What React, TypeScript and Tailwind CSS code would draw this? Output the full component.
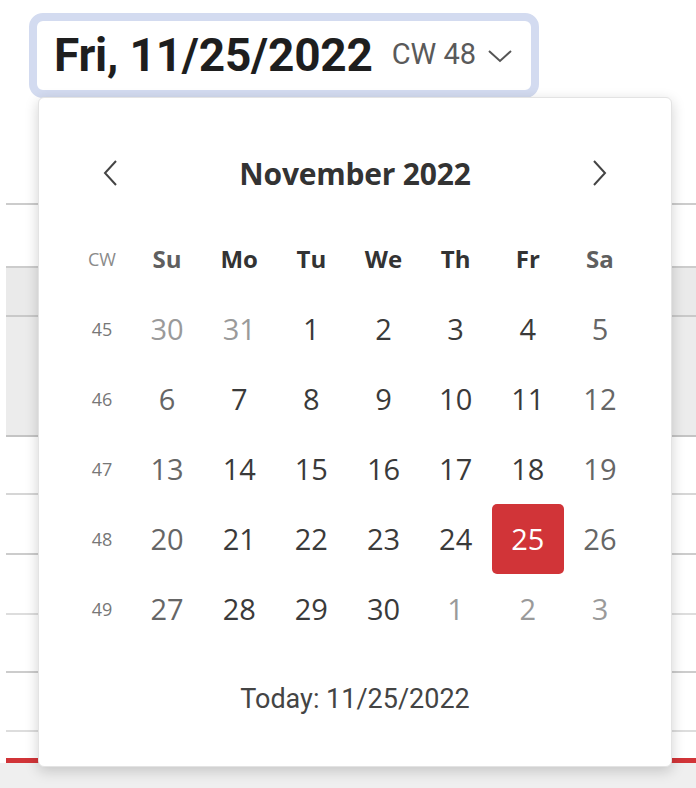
import React from 'react';

const weekdays = ['Su', 'Mo', 'Tu', 'We', 'Th', 'Fr', 'Sa'];

// each week: calendar week number + 7 days, `out` marks days from other months
const weeks = [
  { cw: 45, days: [{ d: 30, out: true }, { d: 31, out: true }, { d: 1 }, { d: 2 }, { d: 3 }, { d: 4 }, { d: 5 }] },
  { cw: 46, days: [{ d: 6 }, { d: 7 }, { d: 8 }, { d: 9 }, { d: 10 }, { d: 11 }, { d: 12 }] },
  { cw: 47, days: [{ d: 13 }, { d: 14 }, { d: 15 }, { d: 16 }, { d: 17 }, { d: 18 }, { d: 19 }] },
  { cw: 48, days: [{ d: 20 }, { d: 21 }, { d: 22 }, { d: 23 }, { d: 24 }, { d: 25, selected: true }, { d: 26 }] },
  { cw: 49, days: [{ d: 27 }, { d: 28 }, { d: 29 }, { d: 30 }, { d: 1, out: true }, { d: 2, out: true }, { d: 3, out: true }] },
] as { cw: number; days: { d: number; out?: boolean; selected?: boolean }[] }[];

const dayColor = (col: number, out?: boolean, selected?: boolean) => {
  if (selected) return 'bg-[#d13438] text-white rounded-[5px]';
  if (out) return 'text-[#9a9a9a]';
  if (col === 0 || col === 6) return 'text-[#666666]';
  return 'text-[#3a3a3a]';
};

export default function App() {
  return (
    <div className="relative w-[696px] h-[788px] bg-white overflow-hidden font-['Open_Sans',sans-serif]">
      {/* date input */}
      <div className="pt-[13px] pl-[29px]">
        <div className="w-[510px] h-[85px] rounded-[14px] border-[8px] border-[#d3dbf0] bg-white flex items-center pl-[17px] pb-[2px]">
          <span className="font-['Roboto',sans-serif] font-bold text-[46px] tracking-[-0.2px] text-[#1e1e1e] leading-none">
            Fri, 11/25/2022
          </span>
          <span className="ml-[19px] font-['Roboto',sans-serif] text-[29px] text-[#5a5a5a] leading-none">CW 48</span>
          <svg className="ml-[11px] mt-[2px]" width="26" height="16" viewBox="0 0 26 16" fill="none">
            <polyline points="2,3 13,13 24,3" stroke="#555" strokeWidth="2" />
          </svg>
        </div>
      </div>

      {/* table behind the popup */}
      <div className="mt-[105px] ml-[6px]">
        <div className="h-[2px] bg-[#cccccc]" />
        <div className="h-[61px]" />
        <div className="h-[2px] bg-[#cccccc]" />
        <div className="h-[47px] bg-[#eaeaea]" />
        <div className="h-[2px] bg-[#c9c9c9]" />
        <div className="h-[118px] bg-[#ececec]" />
        <div className="h-[2px] bg-[#c4c4c4]" />
        <div className="h-[56px]" />
        <div className="h-[2px] bg-[#d6d6d6]" />
        <div className="h-[58px]" />
        <div className="h-[2px] bg-[#cccccc]" />
        <div className="h-[58px]" />
        <div className="h-[2px] bg-[#dddddd]" />
        <div className="h-[56px]" />
        <div className="h-[2px] bg-[#cccccc]" />
        <div className="h-[57px]" />
        <div className="h-[2px] bg-[#dddddd]" />
        <div className="h-[26px]" />
        <div className="h-[5px] bg-[#d13438]" />
      </div>
      <div className="h-[30px] bg-[#efefef]" />

      {/* calendar popup */}
      <div className="absolute left-[38px] top-[97px] w-[634px] h-[670px] bg-white rounded-[6px] border border-[#e3e3e3] shadow-[0_4px_14px_rgba(0,0,0,0.18)]">
        <div className="mt-[47px] h-[56px] flex items-center justify-between px-[62px]">
          <svg width="20" height="28" viewBox="0 0 20 28" fill="none">
            <polyline points="15,2 4,14 15,26" stroke="#444" strokeWidth="2" />
          </svg>
          <span className="text-[30px] font-bold text-[#333333] tracking-[-0.2px]">November 2022</span>
          <svg width="20" height="28" viewBox="0 0 20 28" fill="none">
            <polyline points="5,2 16,14 5,26" stroke="#444" strokeWidth="2" />
          </svg>
        </div>

        <div className="mt-[23px] pl-[34px] pr-[35px]">
          <div className="grid grid-cols-[58px_repeat(7,1fr)] h-[70px] items-center text-center">
            <span className="text-[18px] text-[#8a8a8a]">CW</span>
            {weekdays.map((w, i) => (
              <span
                key={w}
                className={`text-[24px] font-bold ${i === 0 || i === 6 ? 'text-[#5f5f5f]' : 'text-[#333333]'}`}
              >
                {w}
              </span>
            ))}
          </div>

          {weeks.map((week) => (
            <div key={week.cw} className="grid grid-cols-[58px_repeat(7,1fr)] h-[70px] items-center text-center">
              <span className="text-[18px] text-[#777777]">{week.cw}</span>
              {week.days.map((day, i) => (
                <div
                  key={i}
                  className={`h-[70px] flex items-center justify-center text-[29px] ${dayColor(i, day.out, day.selected)}`}
                >
                  {day.d}
                </div>
              ))}
            </div>
          ))}
        </div>

        <div className="mt-[37px] h-[36px] flex items-center justify-center font-['Roboto',sans-serif] text-[27px] text-[#444444]">
          Today: 11/25/2022
        </div>
      </div>
    </div>
  );
}
